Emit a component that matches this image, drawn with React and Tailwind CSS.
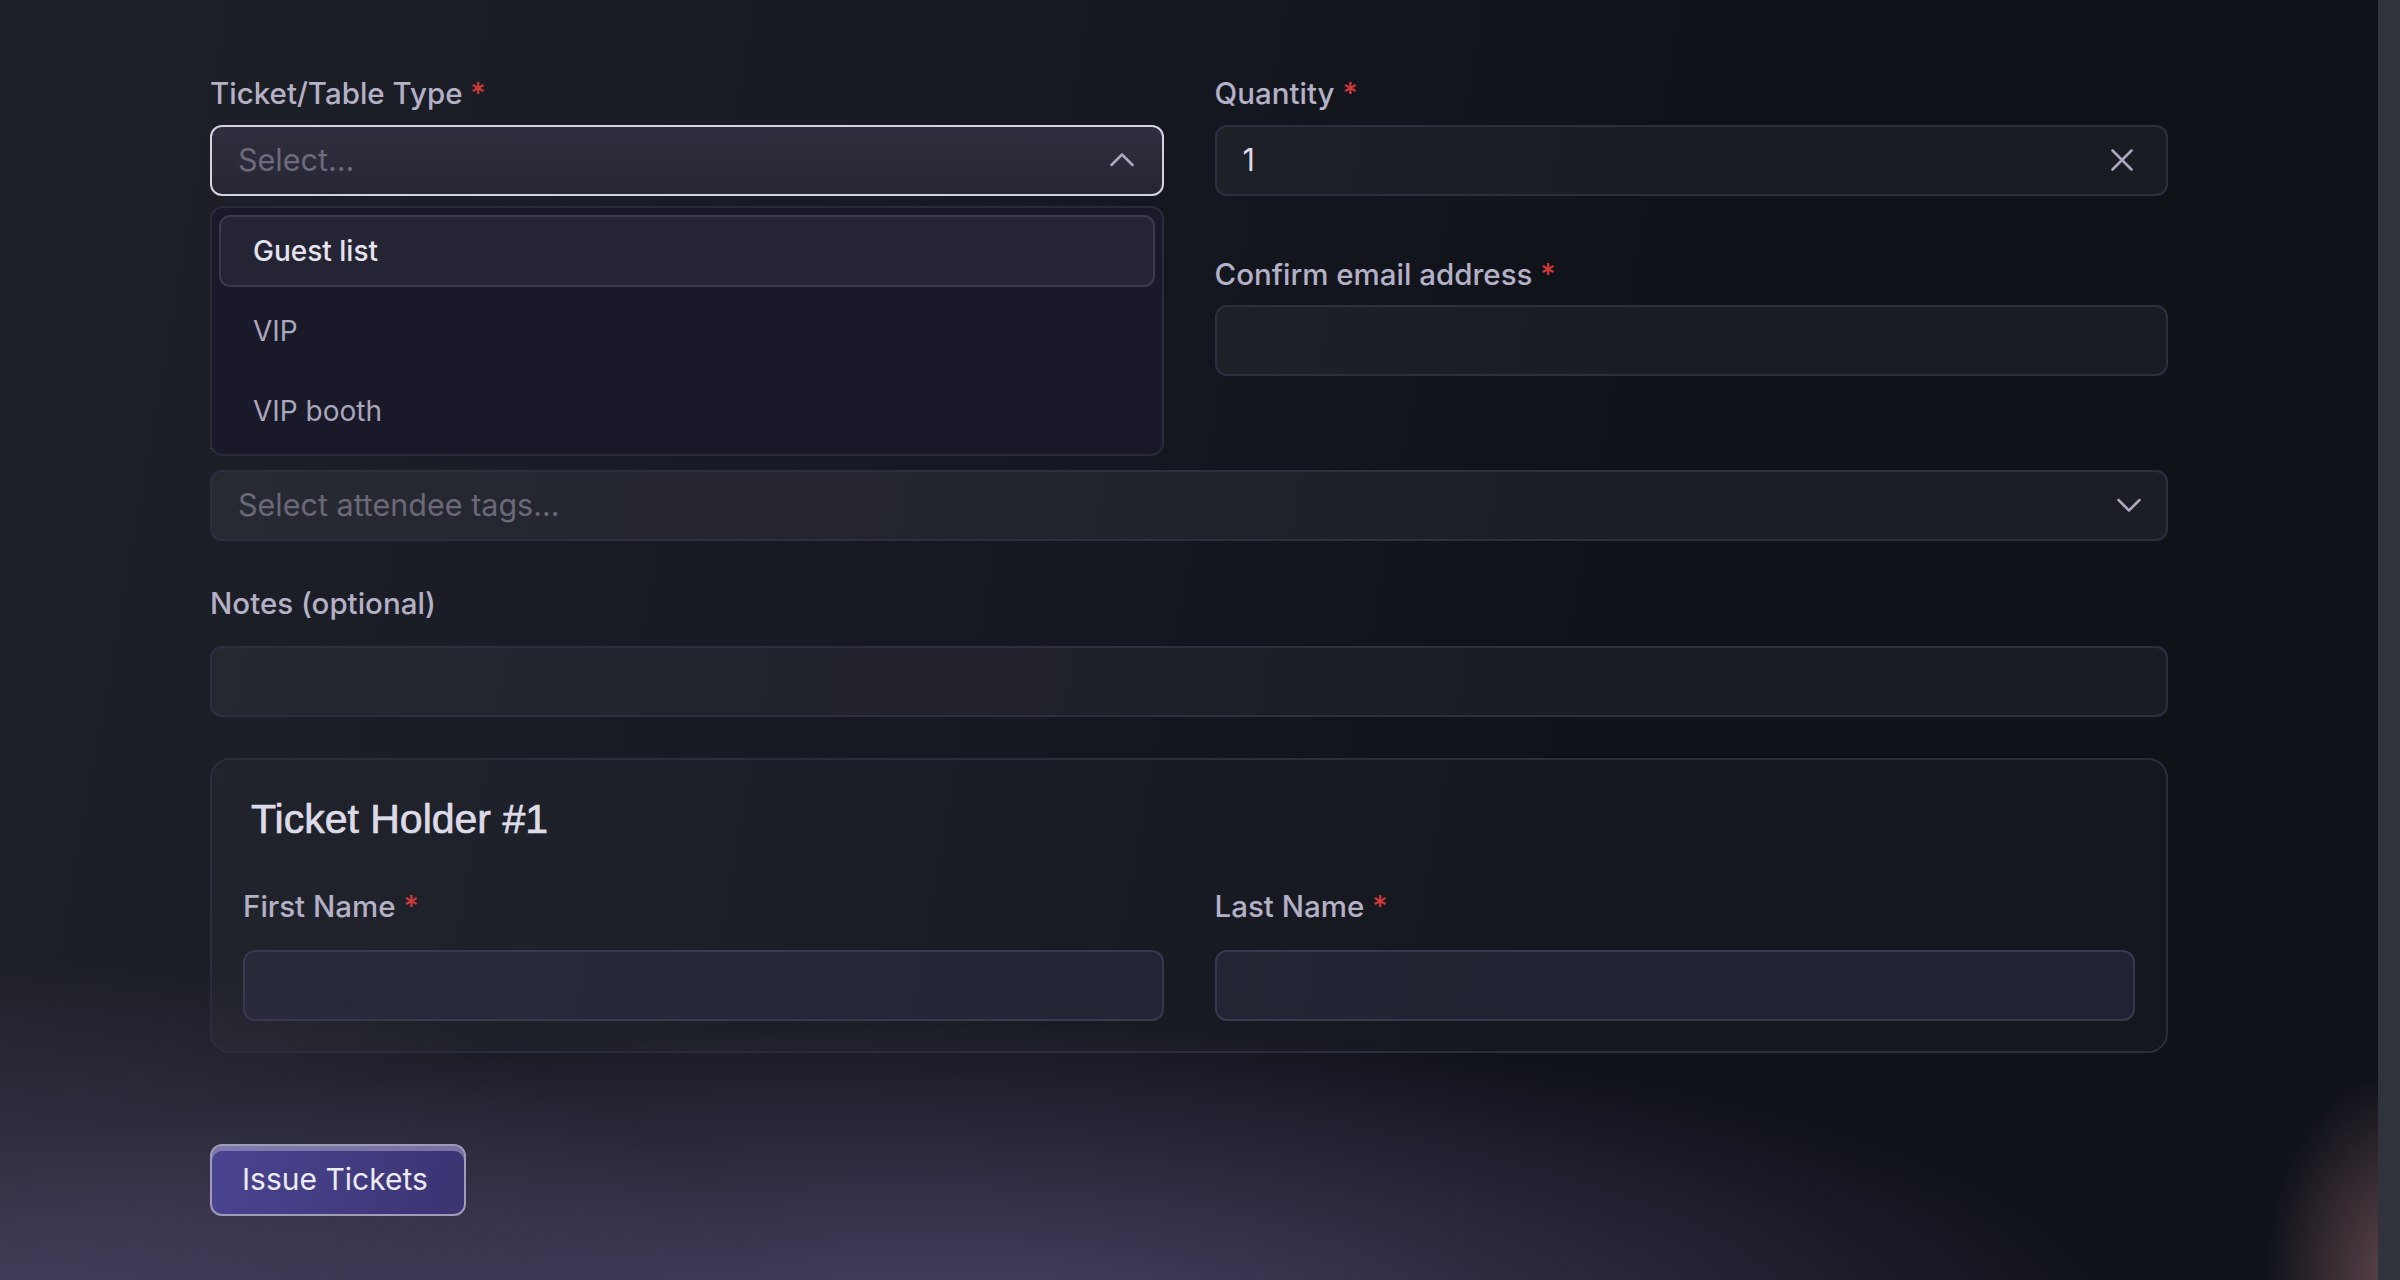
import React, { useState } from "react";

const TICKET_TYPES = ["Guest list", "VIP", "VIP booth"];

const Label = ({ children, required }) => (
  <label className="block text-[29.5px] leading-none font-medium text-[#b4b0c6]">
    {children}
    {required && <span className="text-[#cf3a3a]"> *</span>}
  </label>
);

const ChevronUp = () => (
  <svg width="24" height="14" viewBox="0 0 24 14" fill="none">
    <path d="M1.5 12 L12 1.5 L22.5 12" stroke="#aca8bf" strokeWidth="2.5" strokeLinecap="round" strokeLinejoin="round" />
  </svg>
);

const ChevronDown = () => (
  <svg width="24" height="14" viewBox="0 0 24 14" fill="none">
    <path d="M1.5 2 L12 12.5 L22.5 2" stroke="#aca8bf" strokeWidth="2.5" strokeLinecap="round" strokeLinejoin="round" />
  </svg>
);

const ClearIcon = () => (
  <svg width="22" height="22" viewBox="0 0 22 22" fill="none">
    <path d="M1.5 1.5 L20.5 20.5 M20.5 1.5 L1.5 20.5" stroke="#aca8bf" strokeWidth="2.5" strokeLinecap="round" />
  </svg>
);

// plain text field; `inset` is the lighter variant used inside the holder card
const TextInput = ({ inset, spaced }) => (
  <div
    className={
      (spaced ? "mt-[28px] " : "mt-[16px] ") +
      (inset
        ? "h-[71px] rounded-[12px] border-2 border-[#393850] bg-[#34344a]/45"
        : "h-[71px] rounded-[12px] border-2 border-[#2e2e41] bg-white/[0.045]")
    }
  />
);

export default function App() {
  const [active] = useState(0);

  return (
    <div className="flex h-[1280px] w-full overflow-hidden font-['Inter','Noto_Sans',sans-serif] bg-[radial-gradient(ellipse_60%_30%_at_40%_104%,rgba(80,72,110,0.9),transparent_80%),radial-gradient(ellipse_40%_36%_at_0%_104%,rgba(74,68,100,0.85),transparent_80%),radial-gradient(ellipse_7%_20%_at_100%_100%,rgba(125,88,94,0.75),transparent_80%),linear-gradient(100deg,#1f2129_0%,#181a23_35%,#10121a_65%,#10121a_100%)]">
      <main className="flex-1 px-[210px] pt-[79px]">
        <div className="grid grid-cols-2 gap-x-[51px]">
          {/* ticket type */}
          <div>
            <Label required>Ticket/Table Type</Label>
            <div className="relative mt-[16px]">
              <div className="flex h-[71px] items-center justify-between rounded-[12px] border-2 border-[#d5d2e2] bg-[linear-gradient(180deg,#2e2e3e,#262633)] pl-[26px] pr-[28px]">
                <span className="text-[30.5px] text-[#6d6a7c]">Select...</span>
                <ChevronUp />
              </div>

              <div className="absolute left-0 right-0 top-[calc(100%+10px)] z-10 flex flex-col gap-[8px] rounded-[13px] border-2 border-[#2b2a3d] bg-[#1a1929] p-[7px]">
                {TICKET_TYPES.map((type, i) => (
                  <div
                    key={type}
                    className={
                      i === active
                        ? "flex h-[72px] items-center rounded-[11px] border-2 border-[#3a394f] bg-[#252434] pl-[32px] text-[28px] font-medium text-[#e6e4ee]"
                        : "flex h-[72px] items-center rounded-[11px] border-2 border-transparent pl-[32px] text-[28px] text-[#aaa6bc]"
                    }
                  >
                    {type}
                  </div>
                ))}
              </div>
            </div>
          </div>

          {/* quantity */}
          <div>
            <Label required>Quantity</Label>
            <div className="mt-[16px] flex h-[71px] items-center justify-between rounded-[12px] border-2 border-[#2e2e41] bg-white/[0.045] pl-[26px] pr-[33px]">
              <span className="text-[30.5px] text-[#dcdae6]">1</span>
              <ClearIcon />
            </div>
          </div>

          {/* email */}
          <div className="mt-[64px]">
            <Label required>Email address</Label>
            <TextInput />
          </div>
          <div className="mt-[64px]">
            <Label required>Confirm email address</Label>
            <TextInput />
          </div>

          {/* tags */}
          <div className="col-span-2 mt-[48px]">
            <Label>Attendee Tags</Label>
            <div className="mt-[16px] flex h-[71px] items-center justify-between rounded-[12px] border-2 border-[#2e2e41] bg-white/[0.05] pl-[26px] pr-[25px]">
              <span className="text-[30.5px] text-[#6a6879]">Select attendee tags...</span>
              <ChevronDown />
            </div>
          </div>

          {/* notes */}
          <div className="col-span-2 mt-[48px]">
            <Label>Notes (optional)</Label>
            <TextInput spaced />
          </div>

          {/* ticket holders */}
          <div className="col-span-2 mt-[41px] rounded-[20px] border-2 border-[#2c2c3d] bg-white/[0.025] px-[31px] pb-[30px] pt-[39px]">
            <h2 className="pl-[8px] font-['Liberation_Sans','Arial',sans-serif] text-[41px] leading-none text-[#dddbe7] [-webkit-text-stroke:0.7px_#dddbe7]">
              Ticket Holder #1
            </h2>
            <div className="mt-[52px] grid grid-cols-2 gap-x-[51px]">
              <div>
                <Label required>First Name</Label>
                <TextInput inset spaced />
              </div>
              <div>
                <Label required>Last Name</Label>
                <TextInput inset spaced />
              </div>
            </div>
          </div>
        </div>

        <button className="mt-[91px] h-[72px] rounded-[12px] border-2 border-[#a09cb8] bg-[linear-gradient(100deg,#4a4491,#3b3472)] pl-[30px] pr-[36px] text-[30px] text-[#eceaf3] shadow-[inset_0_5px_0_rgba(170,165,200,0.55)]">
          Issue Tickets
        </button>
      </main>

      {/* scrollbar track */}
      <div className="w-[22px] shrink-0 bg-[#30333c]" />
    </div>
  );
}
